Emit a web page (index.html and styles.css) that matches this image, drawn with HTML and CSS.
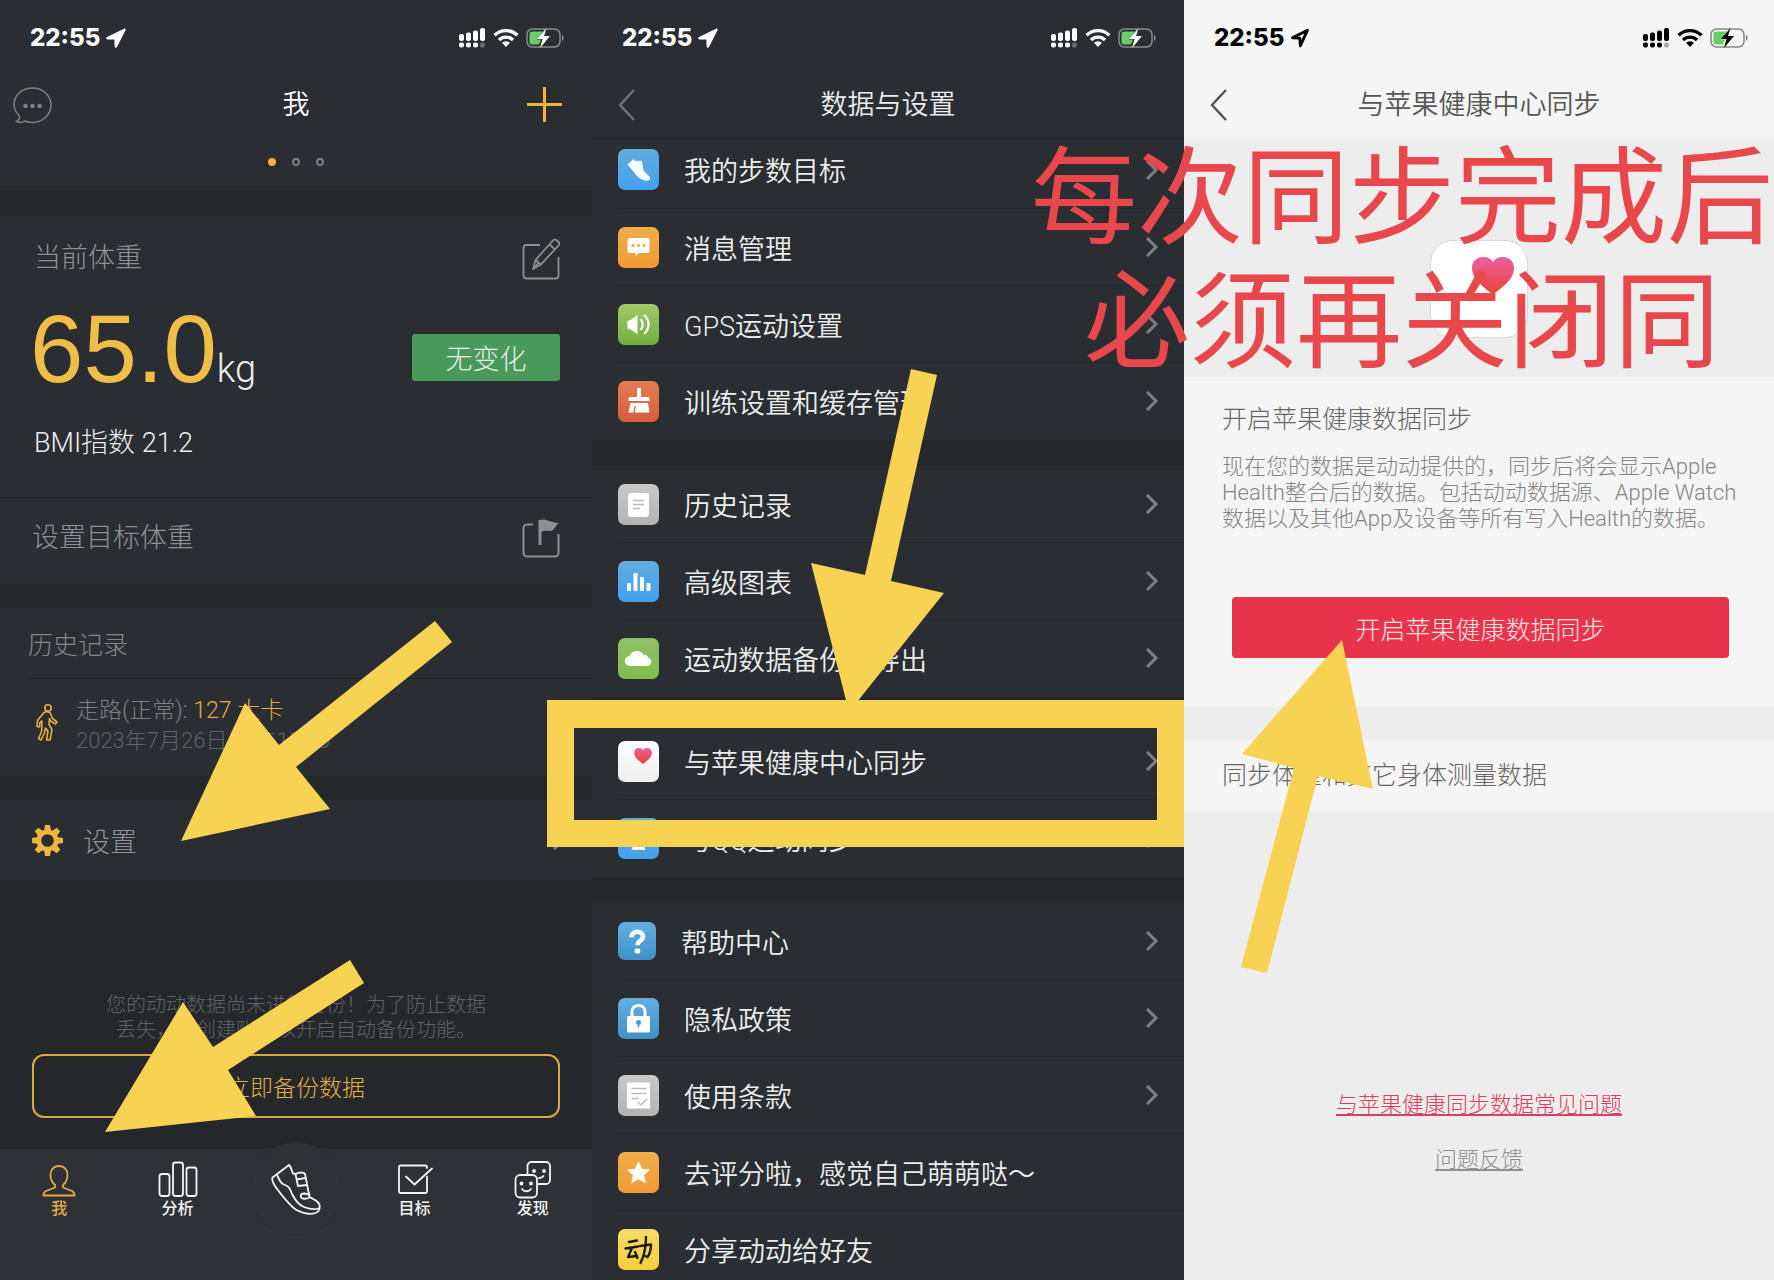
FILE: index.html
```html
<!DOCTYPE html>
<html lang="zh-CN">
<head>
<meta charset="utf-8">
<meta name="viewport" content="width=device-width, initial-scale=1">
<title>与苹果健康中心同步</title>
<link rel="stylesheet" href="styles.css">
</head>
<body>
<svg class="defs" aria-hidden="true">
  <defs>
    <linearGradient id="heart-fill" x1="0" y1="0" x2="0" y2="1">
      <stop offset="0" stop-color="#ec5fa6"/><stop offset="1" stop-color="#e8432c"/>
    </linearGradient>
    <symbol id="location" viewBox="0 0 20 20"><path d="M18.500.6 1 9c-1.200.7-.8 2.300.4 2.400l7 .2.200 7c.1 1.300 1.800 1.600 2.400.4L19.600 2c.4-.9-.300-1.700-1.100-1.400z" fill="currentColor"/></symbol>
    <symbol id="location-open" viewBox="0 0 20 20"><path d="M17.500 2.200 2.500 9.800l7.300.4.500 7.600z" fill="none" stroke="currentColor" stroke-width="2.800" stroke-linejoin="round"/></symbol>
    <symbol id="signal" viewBox="0 0 27 20">
      <g fill="currentColor"><rect x="0" y="6" width="5" height="7" rx="2"/><rect x="7" y="4.500" width="5" height="8.500" rx="2"/><rect x="14" y="2.500" width="5" height="10.500" rx="2"/><rect x="21" y="0" width="5" height="13" rx="2"/><rect x="0" y="14.500" width="5" height="5" rx="2"/><rect x="7" y="14.500" width="5" height="5" rx="2"/><rect x="14" y="14.500" width="5" height="5" rx="2"/><rect x="21" y="14.500" width="5" height="5" rx="2" opacity=".3"/></g>
    </symbol>
    <symbol id="wifi" viewBox="0 0 26 20"><g fill="none" stroke="currentColor" stroke-width="3.400"><path d="M1.600 7.300a16.200 16.200 0 0 1 22.800 0"/><path d="M6 12a10 10 0 0 1 14 0"/></g><path d="M13 19l-4-4.200a5.800 5.800 0 0 1 8 0z" fill="currentColor"/></symbol>
    <symbol id="battery" viewBox="0 0 39 20">
      <rect x="1" y="1" width="33" height="18" rx="5.500" fill="none" stroke="currentColor" stroke-width="1.500" opacity=".45"/>
      <path d="M36 7c2 .6 2 5.400 0 6z" fill="currentColor" opacity=".5"/>
      <path d="M6 3.500h11l-6 8h4l-2 5H6a2.500 2.500 0 0 1-2.500-2.500V6A2.500 2.500 0 0 1 6 3.500z" fill="#65cf63"/>
      <path d="M20.500 0 11 11h5.500L14 20l10-12h-6z" fill="currentColor"/>
    </symbol>
    <symbol id="back" viewBox="0 0 18 32"><path d="M16 1 2 16l14 15" fill="none" stroke="currentColor" stroke-width="2.500"/></symbol>
    <symbol id="chevron" viewBox="0 0 14 20"><path d="M2 1l9 9-9 9" fill="none" stroke="currentColor" stroke-width="3"/></symbol>
    <symbol id="heart" viewBox="0 0 42 38"><path d="M21 38C14 31 0 24 0 11 0 4 5 0 11 0c5 0 8 2 10 5 2-3 5-5 10-5 6 0 11 4 11 11 0 13-14 20-21 27z" fill="url(#heart-fill)"/></symbol>
  </defs>
</svg>

<main class="board">
  <section class="phone phone--dark">
    <header class="top">
      <div class="status">
        <span class="status__time">22:55</span>
        <svg class="status__loc"><use href="#location"/></svg>
        <span class="status__icons"><svg width="27" height="20"><use href="#signal"/></svg><svg width="26" height="20"><use href="#wifi"/></svg><svg width="39" height="20"><use href="#battery"/></svg></span>
      </div>
      <nav class="nav nav--home">
        <button class="icon-button" aria-label="消息">
          <svg width="42" height="38" viewBox="0 0 42 38" fill="none" stroke="#808285" stroke-width="1.500"><path d="M5.500 35.500c2-.7 3.500-2.500 3-5.500A18 17.500 0 0 1 3 19C3 9 11 2 21.500 2S40 9.500 40 19 32 36.500 21.500 36.500c-3 0-5.500-.5-8-1.500-3 2-6 1.500-8 .5z"/><g fill="#808285" stroke="none"><circle cx="14.500" cy="20" r="2.300"/><circle cx="21.500" cy="20" r="2.300"/><circle cx="28.500" cy="20" r="2.300"/></g></svg>
        </button>
        <h1 class="nav__title nav__title--bright">我</h1>
        <button class="icon-button" aria-label="添加">
          <svg width="35" height="35" viewBox="0 0 35 35" stroke="#f0b63c" stroke-width="3"><path d="M17.500 0v35M0 17.500h35"/></svg>
        </button>
      </nav>
    </header>

    <div class="pager"><i class="pager__dot pager__dot--on"></i><i class="pager__dot"></i><i class="pager__dot"></i></div>

    <section class="weight">
      <div class="weight__head">
        <h2 class="label">当前体重</h2>
        <button class="icon-button" aria-label="编辑体重">
          <svg width="38" height="42" viewBox="0 0 38 42" fill="none" stroke="#8d9092" stroke-width="1.800" stroke-linejoin="round"><path d="M18 7H4.500A3 3 0 0 0 1.500 10v27.500a3 3 0 0 0 3 3h29a3 3 0 0 0 3-3V19"/><path d="M11 31l2.500-9L31 2.500c1-1.200 2.500-1.200 3.500-.3l2 1.800c1 1 1 2.300.2 3.300L19 26.500z"/><path d="M13.500 22l5.500 4.500M27.500 6.500l5.500 5M16.500 24.500 11.500 31"/></svg>
        </button>
      </div>
      <div class="weight__row">
        <p class="weight__value">65.0<span class="weight__unit">kg</span></p>
        <button class="change">无变化</button>
      </div>
      <p class="weight__bmi">BMI指数 21.2</p>
    </section>

    <section class="target">
      <h2 class="label">设置目标体重</h2>
      <button class="icon-button" aria-label="设置目标体重">
        <svg width="39" height="40" viewBox="0 0 39 40" fill="none" stroke="#8d9092" stroke-width="2"><path d="M11 6.500H5a3.500 3.500 0 0 0-3.500 3.500v25A3.500 3.500 0 0 0 5 38.500h28a3.500 3.500 0 0 0 3.500-3.500V16"/><path d="M18 2v25" stroke-width="3"/><path d="M18 2c6-2 8 2 19 3-4 2-4 8-9 8-4 0-6-1-10 2z" fill="#8d9092" stroke="none"/></svg>
      </button>
    </section>

    <section class="history">
      <h2 class="history__title">历史记录</h2>
      <div class="history__item">
        <svg width="24" height="54" viewBox="0 0 24 54" fill="none" stroke="#e9b040" stroke-width="1.600" stroke-linejoin="round"><circle cx="13" cy="12" r="3.200"/><path d="M9 16.500c3-1.500 6-.5 7 2l1.500 4 4.500 3.500-1.500 2-5-3-1-2.500-.5 6 3 5-2 10.500h-3.500l1.500-9-2.500-3-1 5-3.500 7-2.500-1.500 3-6.500.5-11-2 1.500-.5 4.500-2.500-.5.500-6z"/></svg>
        <div>
          <p class="history__name">走路(正常): <b>127 大卡</b></p>
          <p class="history__date">2023年7月26日 下午10:50</p>
        </div>
      </div>
    </section>

    <a class="settings" href="#settings">
      <svg width="31" height="31" viewBox="0 0 31 31"><g fill="#f0b63c"><path id="tooth" d="M13 0h5l1 6h-7zM13 31h5l1-6h-7z"/><use href="#tooth" transform="rotate(45 15.500 15.500)"/><use href="#tooth" transform="rotate(90 15.500 15.500)"/><use href="#tooth" transform="rotate(135 15.500 15.500)"/></g><circle cx="15.500" cy="15.500" r="8.600" fill="none" stroke="#f0b63c" stroke-width="4.600"/></svg>
      <span class="settings__text">设置</span>
      <svg class="chevron"><use href="#chevron"/></svg>
    </a>

    <section class="backup">
      <p class="backup__text">您的动动数据尚未进行备份！为了防止数据丢失，请创建账户以开启自动备份功能。</p>
      <button class="backup__button">立即备份数据</button>
    </section>

    <nav class="tabs">
      <a class="tab tab--on" href="#me"><svg width="40" height="40" viewBox="0 0 40 40"><path d="M20 7c-5.500 0-8.500 4-8.500 9 0 4.500 2 8 4.500 10v2.500L7 32c-2 1-2.500 2.500-2.500 4.500h31c0-2-.5-3.500-2.500-4.500l-9-3.500V26c2.500-2 4.500-5.500 4.500-10 0-5-3-9-8.500-9z"/></svg>我</a>
      <a class="tab" href="#analysis"><svg width="40" height="40" viewBox="0 0 40 40"><rect x="1.500" y="15" width="10" height="22" rx="2.500"/><rect x="15" y="3.500" width="10" height="33.500" rx="2.500"/><rect x="28.500" y="8.500" width="10" height="28.500" rx="2.500"/></svg>分析</a>
      <a class="tab tab--shoe" href="#run" aria-label="运动"><svg width="52" height="52" viewBox="0 0 52 52"><path d="M19 2 2.500 14.500c-1.500 4 2 8 5 12 6 8 14 18 20 21 6 3 13 4 18 2.500 4-1.500 4.500-5 4-8-1-4-5-5.500-10-8L35 11c-1-2-6-2-9.500 0l-2.500-.5c-1.500-3-1.500-6-4-8.500z"/><path d="M7 12c3 6 4 9 8 10 4 1 5 4 7 9 3 6 7 11 12 13 5 2 10 3 14.500 1.500M25.500 11l2.500 12 9-1M26.500 16.500l9-1.500M39.500 31.500l-5-1c-3 0-5 1-3 4.500 2 1 5 1 8-.5"/></svg></a>
      <a class="tab" href="#goal"><svg width="40" height="40" viewBox="0 0 40 40"><path d="M33 9V8a1.500 1.500 0 0 0-1.500-1.500h-25A1.500 1.500 0 0 0 5 8v24.500A1.500 1.500 0 0 0 6.500 34h25a1.500 1.500 0 0 0 1.500-1.500V17.500"/><path d="M12 17.500l8.500 8L38 9.500"/></svg>目标</a>
      <a class="tab" href="#discover"><svg width="40" height="40" viewBox="0 0 40 40"><path d="M14.500 14.500V7a4 4 0 0 1 4-4H33a4 4 0 0 1 4 4v14a4 4 0 0 1-4 4h-7.500"/><rect x="2.500" y="16" width="21.500" height="22.500" rx="4.500"/><path d="M9 30c2 3 7 3 9 0M26 19c2 0 3.500-.5 4.500-2"/><g class="tab__eyes"><circle cx="8.500" cy="24.500" r="1.900"/><circle cx="18" cy="24.500" r="1.900"/><circle cx="21" cy="12" r="1.900"/><circle cx="31" cy="12" r="1.900"/></g></svg>发现</a>
    </nav>
  </section>

  <section class="phone phone--dark">
    <header class="top top--line">
      <div class="status">
        <span class="status__time">22:55</span>
        <svg class="status__loc"><use href="#location"/></svg>
        <span class="status__icons"><svg width="27" height="20"><use href="#signal"/></svg><svg width="26" height="20"><use href="#wifi"/></svg><svg width="39" height="20"><use href="#battery"/></svg></span>
      </div>
      <nav class="nav">
        <button class="icon-button nav__back" aria-label="返回"><svg width="18" height="32"><use href="#back"/></svg></button>
        <h1 class="nav__title">数据与设置</h1>
      </nav>
    </header>

    <ul class="menu">
      <li><a class="menu__row menu__row--first" href="#steps"><svg class="tile tile--sky" viewBox="0 0 41 41"><path d="M9.500 15.500l6-5.500 2 2.500 1.500-1.500 1 2 1.500-1.500 2.500 1 1.500 9 6 6c1.500 3 0 4.500-3.500 4-5-.5-8-3-11-7z" fill="#fff"/></svg><span>我的步数目标</span><svg class="chevron"><use href="#chevron"/></svg></a></li>
      <li><a class="menu__row" href="#messages"><svg class="tile tile--orange" viewBox="0 0 41 41"><path d="M12 11h17a2.500 2.500 0 0 1 2.500 2.500v10A2.500 2.500 0 0 1 29 26h-8l-3.500 3v-3H12a2.500 2.500 0 0 1-2.500-2.500v-10A2.500 2.500 0 0 1 12 11z" fill="#fff"/><g fill="#f0a23a"><circle cx="15" cy="18.500" r="1.400"/><circle cx="20.500" cy="18.500" r="1.400"/><circle cx="26" cy="18.500" r="1.400"/></g></svg><span>消息管理</span><svg class="chevron"><use href="#chevron"/></svg></a></li>
      <li><a class="menu__row" href="#gps"><svg class="tile tile--green" viewBox="0 0 41 41"><path d="M9.500 17l3-1 7-5v19l-7-4.500-3-1z" fill="#fff"/><path d="M22.500 15c3 3 3 8 0 11M26 11c6 5 6 14 0 19" fill="none" stroke="#fff" stroke-width="2.200"/></svg><span>GPS运动设置</span><svg class="chevron"><use href="#chevron"/></svg></a></li>
      <li><a class="menu__row" href="#training"><svg class="tile tile--rust" viewBox="0 0 41 41"><path d="M19 7.500q2-1.500 4 0V16h7q1.500 0 1.500 1.500V20h-21v-2.500Q10.500 16 12 16h7zM12.500 22h17.500l1.500 9.500H11.500l-1 0z" fill="#fff"/><path d="M16 32l1-7" stroke="#dc6b44" stroke-width="1.500"/></svg><span>训练设置和缓存管理</span><svg class="chevron"><use href="#chevron"/></svg></a></li>
    </ul>
    <ul class="menu">
      <li><a class="menu__row" href="#history"><svg class="tile tile--grey" viewBox="0 0 41 41"><rect x="10" y="9" width="21" height="24" rx="3" fill="#fff"/><path d="M15 16.500h11M15 20.500h11M15 24.500h7" stroke="#bbb" stroke-width="1.500"/></svg><span>历史记录</span><svg class="chevron"><use href="#chevron"/></svg></a></li>
      <li><a class="menu__row" href="#charts"><svg class="tile tile--sky" viewBox="0 0 41 41"><g fill="#fff"><rect x="9" y="22" width="4" height="8" rx="1"/><rect x="15.500" y="12" width="4" height="18" rx="1"/><rect x="22" y="16" width="4" height="14" rx="1"/><rect x="28.500" y="22" width="4" height="8" rx="1"/></g></svg><span>高级图表</span><svg class="chevron"><use href="#chevron"/></svg></a></li>
      <li><a class="menu__row" href="#export"><svg class="tile tile--leaf" viewBox="0 0 41 41"><path d="M12 28a5 5 0 0 1-.5-10c2-6 11-7 14-1 2.500-.5 4 .5 4.500 2.500 5 1.500 4 8.500-1 8.500z" fill="#fff"/></svg><span>运动数据备份和导出</span><svg class="chevron"><use href="#chevron"/></svg></a></li>
    </ul>
    <ul class="menu">
      <li><a class="menu__row" href="#health"><svg class="tile tile--white" viewBox="0 0 41 41"><use href="#heart" x="16" y="7" width="18" height="16"/></svg><span>与苹果健康中心同步</span><svg class="chevron"><use href="#chevron"/></svg></a></li>
      <li><a class="menu__row" href="#qq"><svg class="tile tile--sky" viewBox="0 0 41 41"><path d="M20.500 8c-5 0-7.500 4-7 9l-3 7 2 1 2 4-1 3h6l1-1 1 1h6l-1-3 2-4 2-1-3-7c.5-5-2-9-7-9z" fill="#fff"/></svg><span>与QQ运动同步</span><svg class="chevron"><use href="#chevron"/></svg></a></li>
    </ul>
    <ul class="menu">
      <li><a class="menu__row" href="#help"><svg class="tile tile--blue tile--small" viewBox="0 0 41 41"><path d="M14.500 16.500c0-8 12.500-7.500 12.500-1 0 5-6 4.500-6 9.500" fill="none" stroke="#fff" stroke-width="5"/><rect x="18" y="28.500" width="6" height="5.500" rx="1.500" fill="#fff"/></svg><span>帮助中心</span><svg class="chevron"><use href="#chevron"/></svg></a></li>
      <li><a class="menu__row" href="#privacy"><svg class="tile tile--blue" viewBox="0 0 41 41"><path d="M14 19v-5.500c0-8 13-8 13 0V19" fill="none" stroke="#fff" stroke-width="3"/><rect x="9" y="18" width="23" height="16.500" rx="1.500" fill="#fff"/><path d="M20.500 24.500v5" stroke="#469bd3" stroke-width="1.600"/><circle cx="20.500" cy="24.500" r="2.500" fill="#469bd3"/></svg><span>隐私政策</span><svg class="chevron"><use href="#chevron"/></svg></a></li>
      <li><a class="menu__row" href="#terms"><svg class="tile tile--grey" viewBox="0 0 41 41"><rect x="9" y="7.500" width="23" height="26" rx="1" fill="#fff"/><path d="M13.500 13.500h15M13.500 18.500h15M13.500 23.500h7M20 27l3 3 6-6" fill="none" stroke="#bbb" stroke-width="1.500"/></svg><span>使用条款</span><svg class="chevron"><use href="#chevron"/></svg></a></li>
      <li><a class="menu__row" href="#rate"><svg class="tile tile--orange" viewBox="0 0 41 41"><path d="M20.500 9l3.600 7.700 8 .9-6 5.600 1.700 8.300-7.300-4.200-7.300 4.200 1.700-8.300-6-5.600 8-.9z" fill="#fff"/></svg><span>去评分啦，感觉自己萌萌哒～</span></a></li>
      <li><a class="menu__row menu__row--last" href="#share"><svg class="tile tile--yellow" viewBox="0 0 41 41" fill="none" stroke="#1e1a10" stroke-width="2.400" stroke-linecap="round" stroke-linejoin="round"><path d="M11 13l8-1.500M7.500 19.500l12.500-2M14 19l-4 9 9-1M17 23l2.500 6M22 17l11-1.500c0 5-1 9-3.500 12.500l-2.500-1M28 8c0 9-1 17-5.500 26"/></svg><span>分享动动给好友</span></a></li>
    </ul>
  </section>

  <section class="phone phone--light">
    <header class="top">
      <div class="status">
        <span class="status__time">22:55</span>
        <svg class="status__loc"><use href="#location-open"/></svg>
        <span class="status__icons"><svg width="27" height="20"><use href="#signal"/></svg><svg width="26" height="20"><use href="#wifi"/></svg><svg width="39" height="20"><use href="#battery"/></svg></span>
      </div>
      <nav class="nav">
        <button class="icon-button nav__back" aria-label="返回"><svg width="18" height="32"><use href="#back"/></svg></button>
        <h1 class="nav__title">与苹果健康中心同步</h1>
      </nav>
    </header>

    <div class="hero"><div class="hero__app"><svg width="42" height="38"><use href="#heart"/></svg></div></div>

    <section class="sync">
      <h2 class="sync__title">开启苹果健康数据同步</h2>
      <p class="sync__text">现在您的数据是动动提供的，同步后将会显示Apple Health整合后的数据。包括动动数据源、Apple Watch数据以及其他App及设备等所有写入Health的数据。</p>
      <button class="sync__button">开启苹果健康数据同步</button>
    </section>

    <a class="body-data" href="#body">同步体重和其它身体测量数据</a>

    <footer class="links">
      <a class="links__faq" href="#faq">与苹果健康同步数据常见问题</a>
      <a class="links__feedback" href="#feedback">问题反馈</a>
    </footer>
  </section>

  <svg class="marks" viewBox="0 0 1774 1280" preserveAspectRatio="none" aria-hidden="true">
    <g fill="#f8d253">
      <path d="M435 621 452 642 296 767 330 809 181 841 245 703 279 745z"/>
      <path d="M350 960 364 983 228 1070 256 1116 105 1132 183 1002 213 1047z"/>
      <path d="M911 369 937 375 891 581 944 593 849 712 811 563 865 575z"/>
      <path d="M1342 640 1373 789 1318 776 1267 973 1241 967 1294 768 1242 754z"/>
      <path fill-rule="evenodd" d="M547 700H1184V847H547zM574 728V820H1157V728z"/>
    </g>
  </svg>
  <p class="caption">每次同步完成后<br>必须再关闭同</p>
</main>
</body>
</html>
```

FILE: styles.css
```css
* {
  box-sizing: border-box;
}

body,
h1,
h2,
p,
ul {
  margin: 0;
  padding: 0;
}

body {
  font-family: Roboto, "Noto Sans CJK SC", sans-serif;
  font-weight: 300;
  background: #24282a;
}

h1,
h2,
b {
  font-weight: inherit;
}

a {
  color: inherit;
  text-decoration: none;
}

button {
  padding: 0;
  border: 0;
  background: none;
  color: inherit;
  font: inherit;
}

svg {
  display: block;
  flex: none;
}

ul {
  list-style: none;
}

.defs {
  position: absolute;
  width: 0;
  height: 0;
}

.board {
  position: relative;
  display: grid;
  grid-template-columns: 592fr 592fr 590fr;
  min-height: 100vh;
  overflow: hidden;
}

.phone {
  display: flex;
  flex-direction: column;
  min-width: 0;
}

.phone--dark {
  background: #24282a;
  color: #eceded;
}

.phone--light {
  background: #ededed;
  color: #666;
}

/* Status bar and title bar */

.top {
  padding-bottom: 6px;
  background: #2a2d31;
}

.top--line {
  padding-bottom: 5px;
  border-bottom: 1px solid #24272a;
}

.phone--light .top {
  padding-bottom: 4px;
  background: #f5f5f5;
}

.status {
  display: flex;
  align-items: center;
  gap: 6px;
  height: 76px;
  padding: 0 27px 0 30px;
  color: #fff;
}

.phone--light .status {
  padding-right: 25px;
  color: #000;
}

.status__time {
  font: 800 24px/30px Inter, sans-serif;
}

.status__loc {
  width: 20px;
  height: 20px;
}

.status__icons {
  display: flex;
  gap: 7px;
  margin-left: auto;
}

.nav {
  display: grid;
  grid-template-columns: 60px 1fr 60px;
  align-items: center;
  height: 57px;
  padding: 0 26px;
}

.nav--home {
  grid-template-columns: 54px 1fr 35px;
  padding: 0 30px 0 11px;
}

.nav__title {
  font-size: 27px;
  font-weight: 350;
  line-height: 40px;
  text-align: center;
}

.nav__title--bright {
  color: #fff;
}

.phone--light .nav__title {
  color: #555;
}

.nav__back {
  color: #707376;
}

.phone--light .nav__back {
  color: #555;
}

/* Profile screen */

.pager {
  display: flex;
  justify-content: center;
  gap: 16px;
  height: 51px;
  padding-top: 19px;
  background: #2a2d31;
}

.pager__dot {
  width: 8px;
  height: 8px;
  border: 2px solid #7d8083;
  border-radius: 50%;
}

.pager__dot--on {
  border-color: #f0b63c;
  background: #f0b63c;
}

.label {
  color: #8f9294;
  font-size: 27px;
  line-height: 40px;
}

.weight {
  margin-top: 26px;
  padding: 22px 32px 34px 34px;
  border-bottom: 1px solid #1f2224;
  background: #2a2d31;
}

.weight__head,
.weight__row {
  display: flex;
  justify-content: space-between;
}

.weight__head {
  height: 40px;
}

.weight__row {
  align-items: flex-end;
  margin: 23px 0 26px;
}

.weight__value {
  margin-left: -4px;
  color: #f0bd48;
  font-family: "Liberation Sans", sans-serif;
  font-size: 96px;
  line-height: 96px;
}

.weight__unit {
  color: #eceded;
  font-family: Roboto, sans-serif;
  font-size: 38px;
  line-height: 38px;
}

.change {
  width: 148px;
  height: 47px;
  margin-bottom: 16px;
  border-radius: 3px;
  background: #479a59;
  font-size: 27px;
}

.weight__bmi {
  font-size: 27px;
  line-height: 40px;
}

.target {
  display: flex;
  align-items: center;
  justify-content: space-between;
  height: 86px;
  padding: 0 31px 7px 32px;
  background: #2a2d31;
}

.history {
  margin: 24px 0;
  background: #2a2d31;
}

.history__title {
  height: 71px;
  margin-left: 28px;
  padding-top: 18px;
  border-bottom: 1px solid #1f2224;
  color: #85888b;
  font-size: 25px;
  line-height: 40px;
}

.history__item {
  display: flex;
  gap: 17px;
  padding: 17px 35px 20px;
}

.history__name {
  color: #7d7f82;
  font-size: 23px;
  line-height: 30px;
}

.history__name b {
  color: #e3ad42;
}

.history__date {
  color: #606366;
  font-size: 22px;
  line-height: 30px;
}

.settings {
  display: flex;
  align-items: center;
  gap: 20px;
  height: 80px;
  padding: 0 26px 0 32px;
  background: #2a2d31;
}

.settings__text {
  color: #8f9294;
  font-size: 27px;
}

.backup {
  padding: 113px 32px 31px;
}

.backup__text {
  width: 396px;
  margin: 0 auto 11px;
  color: #606366;
  font-size: 20px;
  line-height: 25px;
  text-align: center;
}

.backup__button {
  width: 100%;
  height: 64px;
  border: 2px solid #d8a945;
  border-radius: 12px;
  color: #e3b048;
  font-size: 23px;
}

.tabs {
  display: grid;
  flex: 1;
  grid-template-columns: repeat(5, 1fr);
  min-height: 131px;
  padding-top: 10px;
  background: #2e3135;
}

.tab {
  display: flex;
  flex-direction: column;
  align-items: center;
  color: #f4f4f4;
  font-size: 16px;
  font-weight: 500;
  line-height: 20px;
}

.tab--on {
  color: #e3ad42;
}

.tab svg {
  fill: none;
  stroke: currentColor;
  stroke-width: 1.8;
  stroke-linecap: round;
  stroke-linejoin: round;
}

.tab .tab__eyes {
  fill: currentColor;
  stroke: none;
}

.tab--shoe {
  width: 94px;
  height: 94px;
  margin-top: -17px;
  padding-top: 20px;
  border: 1px solid #2b2e31;
  border-radius: 50%;
  background: #2e3135;
  justify-self: center;
}

/* Settings list */

.menu {
  background: #2a2d31;
}

.menu + .menu {
  margin-top: 26px;
}

.menu__row {
  display: flex;
  align-items: center;
  gap: 25px;
  height: 77px;
  margin-left: 26px;
  padding-right: 25px;
  border-bottom: 1px solid #26292c;
  font-size: 27px;
  font-weight: 350;
  white-space: nowrap;
}

.menu li:last-child .menu__row {
  border-bottom-color: transparent;
}

.menu__row--first {
  height: 70px;
  padding-bottom: 8px;
}

.menu__row--last {
  height: 69px;
  padding-top: 8px;
}

.tile {
  width: 41px;
  height: 41px;
  border-radius: 7px;
}

.tile--small {
  width: 38px;
  height: 38px;
}

.tile--sky {
  background: linear-gradient(#63abdc, #42a1f2);
}

.tile--orange {
  background: linear-gradient(#eeae48, #f39a35);
}

.tile--green {
  background: linear-gradient(#a3c96a, #73ad3e);
}

.tile--rust {
  background: linear-gradient(#e67b53, #d45f3a);
}

.tile--grey {
  background: linear-gradient(#c9c9c9, #b3b3b3);
}

.tile--leaf {
  background: linear-gradient(#93be68, #80bd4b);
}

.tile--white {
  background: linear-gradient(#fff, #eee);
}

.tile--blue {
  background: linear-gradient(#62b0e0, #3f91ca);
}

.tile--yellow {
  background: linear-gradient(#f5dc68, #f6ce3c);
}

.chevron {
  width: 14px;
  height: 20px;
  margin-left: auto;
  color: #7c7f82;
}

/* Health sync screen */

.hero {
  display: flex;
  justify-content: center;
  padding: 103px 0 39px;
}

.hero__app {
  width: 98px;
  height: 98px;
  padding: 16px 0 0 41px;
  border: 1px solid #d8d8d8;
  border-radius: 23px;
  background: #fff;
}

.sync {
  padding: 23px 30px 48px 38px;
  background: #f5f5f5;
}

.sync__title {
  font-size: 25px;
  line-height: 40px;
}

.sync__text {
  margin-top: 14px;
  color: #858585;
  font-size: 22px;
  line-height: 26px;
}

.sync__button {
  display: block;
  width: calc(100% - 25px);
  height: 61px;
  margin: 65px 0 0 10px;
  border-radius: 4px;
  background: #e8344a;
  color: #fbe3e6;
  font-size: 25px;
}

.body-data {
  margin-top: 34px;
  padding: 16px 38px 15px;
  background: #f5f5f5;
  font-size: 25px;
  line-height: 40px;
}

.links {
  display: flex;
  flex-direction: column;
  align-items: center;
  gap: 25px;
  margin-top: auto;
  padding-bottom: 105px;
  font-size: 22px;
  line-height: 30px;
}

.links a {
  text-decoration: underline;
}

.links__faq {
  color: #d9405f;
}

.links__feedback {
  color: #8f8f8f;
}

/* Hand-drawn marks lying over the three screens */

.marks {
  position: absolute;
  inset: 0;
  width: 100%;
  height: 100%;
  pointer-events: none;
}

.caption {
  position: absolute;
  top: 137px;
  right: 0;
  width: 744px;
  color: #e8474c;
  font-size: 106px;
  font-weight: 400;
  line-height: 124px;
  text-align: center;
  pointer-events: none;
}
```
